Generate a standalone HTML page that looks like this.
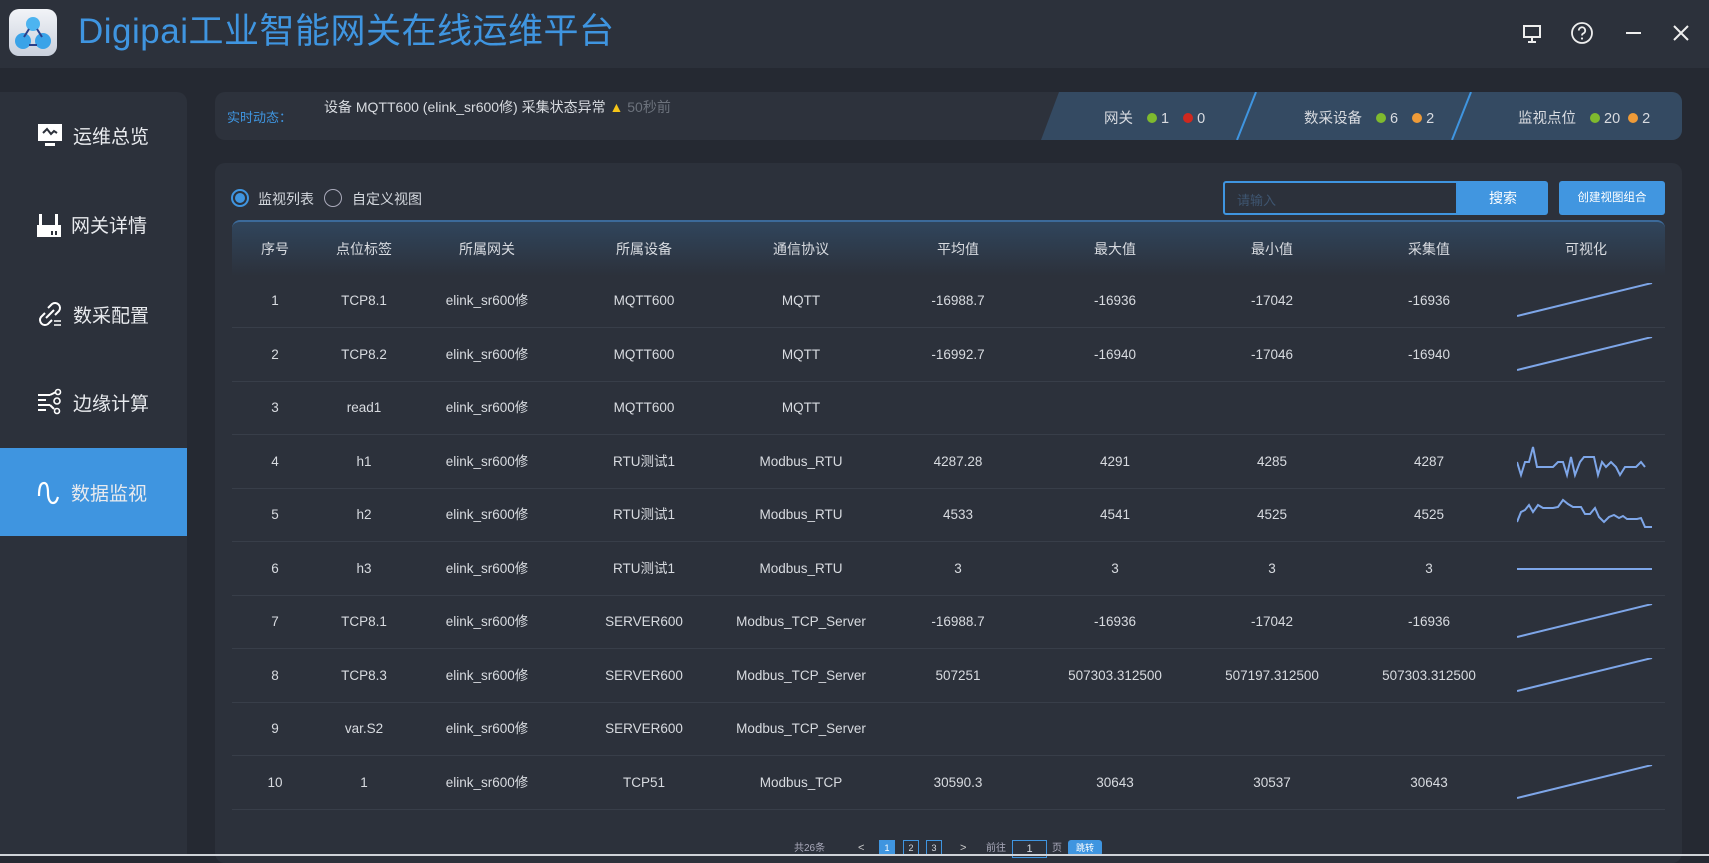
<!DOCTYPE html>
<html><head><meta charset="utf-8"><style>
*{margin:0;padding:0;box-sizing:border-box}
body{width:1709px;height:856px;background:#252932;font-family:"Liberation Sans","Noto Sans CJK SC",sans-serif;color:#d4d8de;position:relative;overflow:hidden}
.abs{position:absolute}
.hdr{left:0;top:0;width:1709px;height:68px;background:#2c313b}
.title{left:78px;top:10px;font-size:35px;color:#3f95e0;letter-spacing:0.5px;line-height:44px}
.side{left:0;top:92px;width:187px;height:764px;background:#2c313b;border-radius:0 10px 0 0}
.item{left:0;width:187px;height:88px;display:flex;align-items:center;padding-left:36px;font-size:19px;color:#e8eaee}
.item svg{margin-right:9px}
.active{background:#3f95e0}
.bar{left:215px;top:92px;width:1467px;height:48px;background:#2d323c;border-radius:10px}
.panel{left:215px;top:163px;width:1467px;height:700px;background:#2c313b;border-radius:10px}
.c{position:absolute;text-align:center;font-size:13.5px;line-height:18px;height:18px;color:#d8dbe0;transform:translateX(-50%);white-space:nowrap}
.row{left:232px;width:1433px;height:1px;background:#383e49}
.dot{display:inline-block;width:10px;height:10px;border-radius:50%;margin:0 4px 0 14px;vertical-align:0px}
</style></head><body>
<div class="abs hdr"></div>
<div class="abs" style="left:9px;top:9px;width:48px;height:47px;border-radius:10px;background:linear-gradient(#f2f4f8,#c9d0dc)">
<svg width="48" height="47"><circle cx="24" cy="15" r="7" fill="#4db4f0"/><circle cx="14" cy="32" r="8" fill="#3aa3e8"/><circle cx="34" cy="32" r="8" fill="#3aa3e8"/><path d="M20 20 L15 28 M28 20 L33 28 M20 36 H28" stroke="#2a3f8a" stroke-width="2" fill="none"/></svg></div>
<div class="abs title">Digipai工业智能网关在线运维平台</div>
<svg class="abs" style="left:1521px;top:23px" width="22" height="22" viewBox="0 0 22 22"><rect x="3" y="3" width="16" height="11" fill="none" stroke="#eee" stroke-width="2"/><path d="M11 14v4M7 19h8" stroke="#eee" stroke-width="2"/></svg>
<svg class="abs" style="left:1570px;top:21px" width="24" height="24" viewBox="0 0 24 24"><circle cx="12" cy="12" r="10" fill="none" stroke="#eee" stroke-width="1.8"/><path d="M8.8 9.5a3.2 3.2 0 1 1 4.5 2.9c-1 .5-1.3 1-1.3 2.1" fill="none" stroke="#eee" stroke-width="1.8"/><circle cx="12" cy="17.5" r="1.1" fill="#eee"/></svg>
<div class="abs" style="left:1626px;top:32px;width:15px;height:2px;background:#eee"></div>
<svg class="abs" style="left:1673px;top:25px" width="16" height="16"><path d="M1 1L15 15M15 1L1 15" stroke="#eee" stroke-width="2"/></svg>

<div class="abs side"></div>
<div class="abs item" style="top:91px"><svg width="28" height="26" viewBox="0 0 28 26"><rect x="2" y="2" width="24" height="17" fill="#fff"/><path d="M7 11l4-4 4 5 3-3 3 2" stroke="#2c313b" stroke-width="2" fill="none"/><rect x="9" y="21" width="10" height="3" fill="#fff"/></svg>运维总览</div>
<div class="abs item" style="top:180px"><svg width="26" height="28" viewBox="0 0 26 28"><rect x="3" y="4" width="3" height="14" fill="#fff"/><rect x="19" y="4" width="3" height="14" fill="#fff"/><rect x="1" y="15" width="24" height="12" fill="#fff"/><rect x="15" y="21" width="2" height="4" fill="#2c313b"/><rect x="19" y="21" width="2" height="4" fill="#2c313b"/></svg>网关详情</div>
<div class="abs item" style="top:270px"><svg width="28" height="28" viewBox="0 0 28 28"><path d="M12 8l4-4a5 5 0 0 1 7 7l-4 4M16 20l-4 4a5 5 0 0 1-7-7l4-4M10 18l8-8" stroke="#fff" stroke-width="2" fill="none"/><path d="M18 21h7M18 25h7" stroke="#fff" stroke-width="1.5"/></svg>数采配置</div>
<div class="abs item" style="top:358px"><svg width="28" height="28" viewBox="0 0 28 28"><path d="M2 7h12M2 12h8M2 17h12M2 22h8M14 7l6-3M14 17l4 4" stroke="#fff" stroke-width="2" fill="none"/><circle cx="22" cy="4" r="2.5" fill="none" stroke="#fff" stroke-width="1.6"/><circle cx="21" cy="13" r="3" fill="none" stroke="#fff" stroke-width="1.6"/><circle cx="21" cy="23" r="2.5" fill="none" stroke="#fff" stroke-width="1.6"/></svg>边缘计算</div>
<div class="abs item active" style="top:448px"><svg width="26" height="28" viewBox="0 0 26 28"><path d="M3 18C3 8 5 5 8 5s4 4 4 10 2 10 5 10 4-3 5-6" stroke="#fff" stroke-width="2.2" fill="none"/></svg>数据监视</div>

<div class="abs bar"></div>
<svg class="abs" style="left:1041px;top:92px" width="641" height="48"><path d="M18 0H631a10 10 0 0 1 10 10V38a10 10 0 0 1-10 10H0Z" fill="#344a62"/><path d="M215 0L196 48M430 0L411 48" stroke="#3f95e0" stroke-width="2"/></svg>
<div class="abs" style="left:227px;top:107px;font-size:13px;color:#3f95e0">实时动态：</div>
<div class="abs" style="left:324px;top:97px;font-size:14px;color:#d8dbe0">设备 MQTT600 (elink_sr600修) 采集状态异常 <span style="color:#f5c518">▲</span> <span style="color:#6c727c">50秒前</span></div>
<div class="abs" style="left:1104px;top:107px;font-size:14.5px;color:#d8dbe0">网关<span class="dot" style="background:#7fba2e"></span>1<span class="dot" style="background:#d0281e"></span>0</div>
<div class="abs" style="left:1304px;top:107px;font-size:14.5px;color:#d8dbe0">数采设备<span class="dot" style="background:#7fba2e"></span>6<span class="dot" style="background:#ef9b38"></span>2</div>
<div class="abs" style="left:1518px;top:107px;font-size:14.5px;color:#d8dbe0">监视点位<span class="dot" style="background:#7fba2e"></span>20<span class="dot" style="background:#ef9b38;margin-left:8px"></span>2</div>

<div class="abs panel"></div>
<div class="abs" style="left:231px;top:189px;width:18px;height:18px;border-radius:50%;border:2px solid #3f95e0;background:#2c313b"><div style="margin:2px;width:10px;height:10px;border-radius:50%;background:#3f95e0"></div></div>
<div class="abs" style="left:258px;top:189px;font-size:14px">监视列表</div>
<div class="abs" style="left:324px;top:189px;width:18px;height:18px;border-radius:50%;border:1.5px solid #aab"></div>
<div class="abs" style="left:352px;top:189px;font-size:14px">自定义视图</div>
<div class="abs" style="left:1223px;top:181px;width:235px;height:34px;border:2px solid #3f95e0;border-radius:3px 0 0 3px;background:#2c313b;color:#3e5570;font-size:13px;padding:7px 12px">请输入</div>
<div class="abs" style="left:1458px;top:181px;width:90px;height:34px;background:#4196e0;border-radius:0 3px 3px 0;color:#fff;font-size:14px;text-align:center;line-height:34px">搜索</div>
<div class="abs" style="left:1559px;top:181px;width:106px;height:34px;background:#4196e0;border-radius:3px;color:#fff;font-size:11.5px;text-align:center;line-height:34px">创建视图组合</div>

<div class="abs" style="left:232px;top:220px;width:1433px;height:56px;border-top:2px solid #3c6a9a;border-radius:8px 8px 0 0;background:linear-gradient(#30455c,#2c313b)"></div>
<div id="t"></div>
<script>
var xs=[275,364,487,644,801,958,1115,1272,1429,1586];
var h=['序号','点位标签','所属网关','所属设备','通信协议','平均值','最大值','最小值','采集值','可视化'];
var d=[
['1','TCP8.1','elink_sr600修','MQTT600','MQTT','-16988.7','-16936','-17042','-16936','L'],
['2','TCP8.2','elink_sr600修','MQTT600','MQTT','-16992.7','-16940','-17046','-16940','L'],
['3','read1','elink_sr600修','MQTT600','MQTT','','','','',''],
['4','h1','elink_sr600修','RTU测试1','Modbus_RTU','4287.28','4291','4285','4287','A'],
['5','h2','elink_sr600修','RTU测试1','Modbus_RTU','4533','4541','4525','4525','B'],
['6','h3','elink_sr600修','RTU测试1','Modbus_RTU','3','3','3','3','F'],
['7','TCP8.1','elink_sr600修','SERVER600','Modbus_TCP_Server','-16988.7','-16936','-17042','-16936','L'],
['8','TCP8.3','elink_sr600修','SERVER600','Modbus_TCP_Server','507251','507303.312500','507197.312500','507303.312500','L'],
['9','var.S2','elink_sr600修','SERVER600','Modbus_TCP_Server','','','','',''],
['10','1','elink_sr600修','TCP51','Modbus_TCP','30590.3','30643','30537','30643','L']];
var s='';
h.forEach(function(t,i){s+='<div class="c" style="left:'+xs[i]+'px;top:240px;font-size:14px">'+t+'</div>'});
var A='0,18 4,31 8,18 12,18 16,3 20,23 30,23 36,23 41,18 46,18 50,31 54,13 58,31 63,18 67,13 72,13 77,13 81,31 85,18 89,23 94,18 99,23 103,31 108,23 114,23 119,23 124,18 128,23';
var B='0,25 4,15 8,13 12,8 16,15 21,8 26,11 30,11 36,11 41,10 46,3 51,7 56,10 64,10 68,17 73,17 78,11 82,20 87,25 92,20 97,18 102,21 106,19 110,22 115,22 120,22 124,21 128,30 135,30';
d.forEach(function(r,j){var cy=301+j*53.5;
for(var i=0;i<9;i++)s+='<div class="c" style="left:'+xs[i]+'px;top:'+(cy-9)+'px">'+r[i]+'</div>';
var v=r[9],p='';
if(v=='L')p='<polyline points="0,33 135,0"/>';
if(v=='A')p='<polyline points="'+A+'"/>';
if(v=='B')p='<polyline points="'+B+'"/>';
if(v=='F')p='<polyline points="0,18 135,18"/>';
if(p)s+='<svg class="abs" style="left:1517px;top:'+(cy-18)+'px" width="136" height="36"><g fill="none" stroke="#7ea6e8" stroke-width="2">'+p+'</g></svg>';
s+='<div class="abs row" style="top:'+(cy+26)+'px"></div>';});
document.getElementById('t').innerHTML=s;
</script>
<div class="abs" style="left:794px;top:843px;font-size:10px;line-height:12px;color:#aab">共26条</div>
<div class="abs" style="left:858px;top:842px;font-size:11px;color:#ccc">&lt;</div>
<div class="abs" style="left:879px;top:840px;width:16px;height:16px;background:#3f95e0;font-size:9px;color:#fff;text-align:center;line-height:16px">1</div>
<div class="abs" style="left:903px;top:840px;width:16px;height:16px;border:1px solid #3f95e0;font-size:9px;text-align:center;line-height:14px">2</div>
<div class="abs" style="left:926px;top:840px;width:16px;height:16px;border:1px solid #3f95e0;font-size:9px;text-align:center;line-height:14px">3</div>
<div class="abs" style="left:960px;top:842px;font-size:11px;color:#ccc">&gt;</div>
<div class="abs" style="left:986px;top:843px;font-size:10px;line-height:12px;color:#aab">前往</div>
<div class="abs" style="left:1012px;top:840px;width:35px;height:18px;border:1px solid #3f95e0;font-size:11px;line-height:16px;text-align:center">1</div>
<div class="abs" style="left:1052px;top:843px;font-size:10px;line-height:12px;color:#aab">页</div>
<div class="abs" style="left:1068px;top:840px;width:34px;height:16px;background:#3f95e0;border-radius:3px;font-size:9px;color:#fff;text-align:center;line-height:16px">跳转</div>
<div class="abs" style="left:0;top:854px;width:1709px;height:2px;background:#cfd3d8"></div>
</body></html>
